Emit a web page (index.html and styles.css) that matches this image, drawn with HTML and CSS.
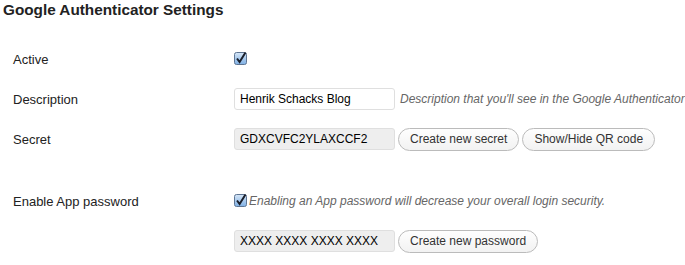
FILE: index.html
```html
<!DOCTYPE html>
<html>
<head>
<meta charset="utf-8">
<link rel="stylesheet" href="styles.css">
</head>
<body>
<h3 class="title">Google Authenticator Settings</h3>
<div class="form">
  <div class="row row-active">
    <div class="label">Active</div>
    <div class="field">
      <span class="check"><svg width="14" height="14" viewBox="0 0 14 14"><defs><linearGradient id="g1" x1="0" y1="0" x2="0" y2="1"><stop offset="0" stop-color="#d6e6f7"/><stop offset="1" stop-color="#7fb0e4"/></linearGradient></defs><rect x="0.5" y="1.5" width="12" height="12" rx="2" fill="url(#g1)" stroke="#5e7593"/><path d="M3 7.5 L5.6 11 L11.5 1.5" fill="none" stroke="#1a1f2b" stroke-width="2"/></svg></span>
    </div>
  </div>
  <div class="row">
    <div class="label">Description</div>
    <div class="field">
      <input class="text" type="text" value="Henrik Schacks Blog">
      <span class="desc">Description that you'll see in the Google Authenticator</span>
    </div>
  </div>
  <div class="row">
    <div class="label">Secret</div>
    <div class="field">
      <input class="text readonly" type="text" value="GDXCVFC2YLAXCCF2" readonly>
      <button class="btn">Create new secret</button>
      <button class="btn">Show/Hide QR code</button>
    </div>
  </div>
  <div class="spacer"></div>
  <div class="row">
    <div class="label">Enable App password</div>
    <div class="field">
      <span class="check"><svg width="14" height="14" viewBox="0 0 14 14"><defs><linearGradient id="g2" x1="0" y1="0" x2="0" y2="1"><stop offset="0" stop-color="#d6e6f7"/><stop offset="1" stop-color="#7fb0e4"/></linearGradient></defs><rect x="0.5" y="1.5" width="12" height="12" rx="2" fill="url(#g2)" stroke="#5e7593"/><path d="M3 7.5 L5.6 11 L11.5 1.5" fill="none" stroke="#1a1f2b" stroke-width="2"/></svg></span><span class="desc tight">Enabling an App password will decrease your overall login security.</span>
    </div>
  </div>
  <div class="row">
    <div class="label"></div>
    <div class="field">
      <input class="text readonly" type="text" value="XXXX XXXX XXXX XXXX" readonly>
      <button class="btn">Create new password</button>
    </div>
  </div>
</div>
</body>
</html>
```
FILE: styles.css
```css
html, body {
  margin: 0;
  padding: 0;
  background: #fff;
}
body {
  font-family: "Liberation Sans", Arial, sans-serif;
  font-size: 13px;
  color: #222;
}
.title {
  margin: 0;
  padding: 1px 0 0 3px;
  font-size: 15.3px;
  font-weight: bold;
  color: #222;
  height: 38px;
  line-height: 18px;
}
.form {
  display: flex;
  flex-direction: column;
}
.row {
  display: grid;
  grid-template-columns: 234px auto;
  align-items: center;
  height: 40px;
}
.label {
  padding-left: 13px;
  color: #222;
}
.field {
  display: flex;
  align-items: center;
  white-space: nowrap;
}
.check {
  display: inline-flex;
  width: 14px;
  height: 14px;
  margin-top: -2px;
}
.text {
  box-sizing: border-box;
  width: 161px;
  height: 22px;
  margin: 0;
  padding: 0 5px;
  border: 1px solid #dfdfdf;
  border-radius: 3px;
  background: #fff;
  font-family: "Liberation Sans", Arial, sans-serif;
  font-size: 12px;
  color: #000;
  outline: none;
}
.text.readonly {
  background: #eeeeee;
}
.desc {
  margin-left: 5px;
  font-style: italic;
  color: #666;
  font-size: 12px;
}
.desc.tight {
  margin-left: 1px;
}
.btn {
  box-sizing: border-box;
  height: 23px;
  margin: 0 0 0 3px;
  padding: 0 11px;
  border: 1px solid #bbb;
  border-radius: 12px;
  background: linear-gradient(#fefefe, #f2f2f2);
  font-family: "Liberation Sans", Arial, sans-serif;
  font-size: 12px;
  color: #333;
}
.spacer {
  height: 22px;
}
```
